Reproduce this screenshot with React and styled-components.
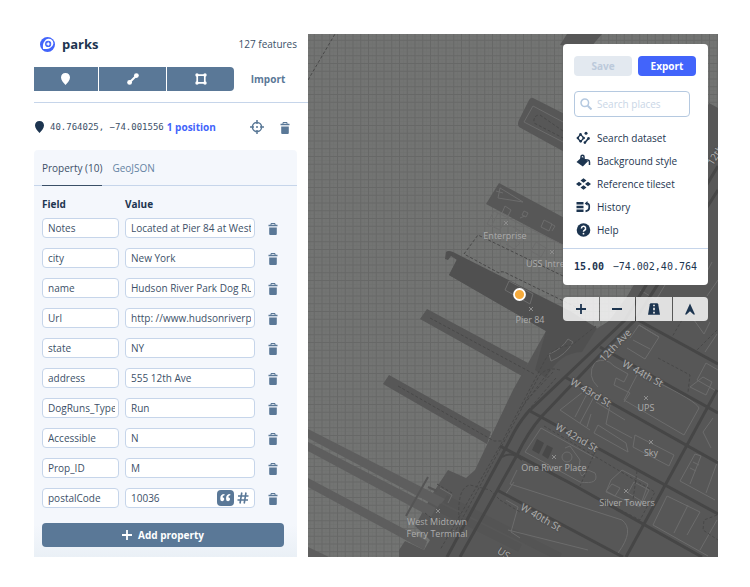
import React from "react";
import styled, { createGlobalStyle } from "styled-components";

const slate = "#5a7897";
const navy = "#1d3550";
const blue = "#4264fb";
const line = "#c6d5ea";
const ui = '"Open Sans", "Noto Sans", sans-serif';
const mono = '"DejaVu Sans Mono", "Liberation Mono", monospace';

const GlobalStyle = createGlobalStyle`
  *, *::before, *::after { box-sizing: border-box; }
  body { margin: 0; background: #fff; color: ${navy}; font: 10px/14px ${ui}; }
  button, input { font: inherit; color: inherit; }
  button { border: 0; padding: 0; background: none; cursor: pointer; }
  svg { display: block; }
`;

const Page = styled.main`
  display: flex;
  padding: 34px 32px 30px 34px;
`;

const Sidebar = styled.section`
  flex: 0 0 274px;
  display: flex;
  flex-direction: column;
`;

const Header = styled.header`
  display: flex;
  align-items: center;
  gap: 7px;
  height: 20px;
  padding: 0 11px 0 6px;
`;

const Title = styled.h1`
  flex: 1;
  margin: 0;
  font-size: 13px;
  line-height: 18px;
  font-weight: 700;
`;

const Count = styled.span`
  color: #3c5068;
`;

const DrawBar = styled.div`
  display: flex;
  align-items: center;
  margin: 13px 0 11px;
`;

const DrawGroup = styled.div`
  display: grid;
  grid-template-columns: 64px 67px 67px;
  gap: 1px;
  height: 24px;
  border-radius: 0 4px 4px 0;
  overflow: hidden;
`;

const DrawButton = styled.button`
  display: grid;
  place-items: center;
  background: ${slate};
  color: #fff;
`;

const ImportButton = styled.button`
  flex: 1;
  padding-right: 6px;
  color: ${slate};
  font-weight: 700;
`;

const Feature = styled.div`
  display: flex;
  align-items: center;
  height: 48px;
  padding-right: 9px;
  border-top: 1px solid ${line};
`;

const Coordinates = styled.span`
  margin: 0 3px 0 4px;
  color: #3c5068;
  font: 9px/14px ${mono};
`;

const Positions = styled.a`
  flex: 1;
  color: ${blue};
  font-weight: 700;
  text-decoration: none;
`;

const IconButton = styled.button`
  display: grid;
  place-items: center;
  width: 28px;
  height: 20px;
  color: ${slate};
`;

const Panel = styled.section`
  flex: 1;
  width: 263px;
  padding-bottom: 10px;
  border-radius: 4px 4px 0 0;
  background: linear-gradient(#f4f7fc 0 92%, #eaf0f6);
`;

const Tabs = styled.div`
  display: flex;
  gap: 10px;
  height: 36px;
  padding: 0 8px;
  border-bottom: 1px solid ${line};
`;

const Tab = styled.button`
  height: 36px;
  border-bottom: 1px solid ${(p) => (p.$active ? "#3a4f67" : "transparent")};
  color: ${(p) => (p.$active ? "#3c5068" : "#6483a3")};
`;

const Properties = styled.table`
  width: 247px;
  margin: 9px 8px 0;
  border-collapse: collapse;
  table-layout: fixed;
`;

const HeadCell = styled.th`
  width: ${(p) => p.$width};
  height: 18px;
  padding: 0;
  text-align: left;
  font-weight: 700;
`;

const Cell = styled.td`
  height: 30px;
  padding: 0 ${(p) => p.$right || "0"} 0 ${(p) => p.$left || "0"};
`;

const InputBox = styled.div`
  display: flex;
  align-items: center;
  height: 20px;
  padding-right: 3px;
  border: 1px solid ${line};
  border-radius: 4px;
  background: #fff;
`;

const TextInput = styled.input`
  flex: 1;
  min-width: 0;
  height: 18px;
  padding: 0;
  margin-left: 5px;
  border: 0;
  outline: 0;
  background: transparent;
  color: #3c5068;
`;

const TypeButton = styled.button`
  display: grid;
  place-items: center;
  width: 17px;
  height: 16px;
  border-radius: 4px;
  background: ${(p) => (p.$active ? slate : "transparent")};
  color: ${(p) => (p.$active ? "#fff" : slate)};
`;

const AddButton = styled.button`
  display: flex;
  align-items: center;
  justify-content: center;
  gap: 6px;
  width: 242px;
  height: 24px;
  margin: 10px 8px 0;
  border-radius: 4px;
  background: ${slate};
  color: #fff;
  font-weight: 700;
`;

const MapArea = styled.section`
  position: relative;
  flex: 1;
  min-width: 0;
  overflow: hidden;
  background: #717271;
`;

const MapCanvas = styled.svg`
  position: absolute;
  inset: 0;
  width: 100%;
  height: 100%;
  font: 9px ${ui};
`;

const Overlay = styled.div`
  position: absolute;
  top: 10px;
  right: 10px;
  width: 145px;
  display: flex;
  flex-direction: column;
  gap: 12px;
`;

const Card = styled.div`
  border-radius: 4px;
  background: #fff;
`;

const Actions = styled.div`
  display: grid;
  grid-template-columns: 1fr 1fr;
  gap: 6px;
  padding: 12px 12px 0 11px;
`;

const ActionButton = styled.button`
  height: 20px;
  border-radius: 4px;
  background: ${(p) => (p.$primary ? blue : "#e3e9f0")};
  color: ${(p) => (p.$primary ? "#fff" : "#bccadb")};
  font-weight: 700;
`;

const SearchBox = styled.label`
  display: flex;
  align-items: center;
  height: 26px;
  margin: 15px 18px 9px 11px;
  padding-left: 5px;
  border: 1px solid #b5c9e0;
  border-radius: 4px;
  color: #b5c9e0;
`;

const SearchInput = styled(TextInput)`
  &::placeholder { color: #c9d6e6; opacity: 1; }
`;

const Menu = styled.nav`
  display: flex;
  flex-direction: column;
  padding-bottom: 7px;
`;

const MenuItem = styled.button`
  display: flex;
  align-items: center;
  gap: 6px;
  height: 23px;
  padding-left: 13px;
  text-align: left;
`;

const Readout = styled.div`
  display: flex;
  justify-content: space-between;
  padding: 10px 11px 11px;
  border-top: 1px solid ${line};
  font: 10px/15px ${mono};
`;

const Zoom = styled.strong`
  font-weight: 700;
`;

const MapControls = styled.div`
  display: grid;
  grid-template-columns: repeat(4, 1fr);
  gap: 1px;
  height: 24px;
  border-radius: 4px;
  overflow: hidden;
`;

const ControlButton = styled.button`
  display: grid;
  place-items: center;
  background: rgba(255, 255, 255, 0.82);
`;

function Logo() {
  return (
    <svg width="15" height="15" viewBox="0 0 16 16" aria-hidden="true">
      <circle cx="8" cy="8" r="8" fill={blue} />
      <path d="M3.300 12.700C2.800 9.500 3.200 6.300 4.900 4.600A4.900 4.900 0 1 1 11.400 11.100c-1.700 1.700-4.900 2.100-8.100 1.600z" fill="#fff" />
      <circle cx="8.700" cy="7.400" r="3.300" fill={blue} />
      <path d="M8.700 4.900l.8 1.700 1.700.8-1.700.8-.8 1.700-.8-1.700-1.700-.8 1.700-.8z" fill="#fff" />
    </svg>
  );
}

function Pin() {
  return (
    <svg width="12" height="12" viewBox="0 0 12 12" aria-hidden="true">
      <path d="M5.500 0C2.700 0 1 2 1 4.500 1 7.500 3.500 9.500 5.500 12c2-2.500 4.500-4.500 4.500-7.500C10 2 8.300 0 5.500 0z" fill="currentColor" />
    </svg>
  );
}

function LineIcon() {
  return (
    <svg width="12" height="12" viewBox="0 0 12 12" fill="currentColor" aria-hidden="true">
      <path d="M3 9L9 3" stroke="currentColor" strokeWidth="2" />
      <circle cx="2.600" cy="9.400" r="2.400" />
      <circle cx="9.400" cy="2.600" r="2.400" />
    </svg>
  );
}

function PolygonIcon() {
  return (
    <svg width="12" height="12" viewBox="0 0 12 12" fill="currentColor" aria-hidden="true">
      <path d="M2.200 2.200h7.600v7.600H2.200z" fill="none" stroke="currentColor" strokeWidth="1.700" />
      <circle cx="2" cy="2" r="1.700" />
      <circle cx="10" cy="2" r="1.700" />
      <circle cx="2" cy="10" r="1.700" />
      <circle cx="10" cy="10" r="1.700" />
    </svg>
  );
}

function Target() {
  return (
    <svg width="14" height="14" viewBox="0 0 14 14" fill="none" stroke="currentColor" aria-hidden="true">
      <circle cx="7" cy="7" r="4.600" strokeWidth="1.500" />
      <path d="M7 0v4M7 10v4M0 7h4M10 7h4" strokeWidth="1.500" />
      <circle cx="7" cy="7" r="3" fill="#fff" stroke="none" />
      <circle cx="7" cy="7" r="1" fill="currentColor" stroke="none" />
    </svg>
  );
}

function Trash() {
  return (
    <svg width="10" height="14" viewBox="0 0 10 14" fill="currentColor" aria-hidden="true">
      <path d="M3 4V2.500h4V4" fill="none" stroke="currentColor" />
      <path d="M.5 3.700h9v1.600h-9zM1.200 6.400h7.600V13q0 1-1 1H2.200q-1 0-1-1z" />
    </svg>
  );
}

function Quote() {
  return (
    <svg width="11" height="10" viewBox="0 0 11 10" fill="currentColor" aria-hidden="true">
      <path d="M4.500 1C1.500 1 .3 2.800.3 5v1.200A2 2 0 1 0 2.600 4.200C2.600 3 3.300 2.400 4.500 2.200zM10.300 1C7.300 1 6.100 2.800 6.100 5v1.200A2 2 0 1 0 8.400 4.200c0-1.200.7-1.800 1.900-2z" />
    </svg>
  );
}

function Hash() {
  return (
    <svg width="12" height="12" viewBox="0 0 12 12" fill="none" stroke="currentColor" strokeWidth="1.600" aria-hidden="true">
      <path d="M4.800.5L3 11.500M9 .5L7.200 11.500M1 4h10.500M.5 8H11" />
    </svg>
  );
}

function Plus() {
  return (
    <svg width="10" height="10" viewBox="0 0 10 10" stroke="currentColor" strokeWidth="1.800" aria-hidden="true">
      <path d="M5 0v10M0 5h10" />
    </svg>
  );
}

function Minus() {
  return (
    <svg width="10" height="10" viewBox="0 0 10 10" stroke="currentColor" strokeWidth="1.800" aria-hidden="true">
      <path d="M0 5h10" />
    </svg>
  );
}

function Road() {
  return (
    <svg width="12" height="12" viewBox="0 0 12 12" aria-hidden="true">
      <path d="M3 .3h6q1 0 1.200 1L12 11.700H0L1.800 1.300Q2 .3 3 .3z" fill="currentColor" />
      <path d="M6 1.800v1.500M6 4.700v2.600M6 8.800v1.700" stroke="#e2e2e2" strokeWidth="1.800" />
    </svg>
  );
}

function Compass() {
  return (
    <svg width="12" height="12" viewBox="0 0 12 12" aria-hidden="true">
      <path d="M6 .5L11 11.500H9.500L6 8.300 2.500 11.500H1z" fill="currentColor" />
    </svg>
  );
}

function SearchIcon() {
  return (
    <svg width="12" height="12" viewBox="0 0 12 12" fill="none" stroke="currentColor" aria-hidden="true">
      <circle cx="4.800" cy="4.800" r="3.800" strokeWidth="1.500" />
      <path d="M7.700 7.700L11.500 11.500" strokeWidth="2" />
    </svg>
  );
}

function DatasetIcon() {
  return (
    <svg width="15" height="14" viewBox="0 0 15 14" fill="currentColor" aria-hidden="true">
      <path d="M4.500 3.500L8 7l-3.500 3.500L1.500 7z" fill="none" stroke="currentColor" strokeWidth="1.200" />
      <circle cx="4.500" cy="3.400" r="1.300" />
      <circle cx="1.900" cy="7" r="1.300" />
      <circle cx="7.600" cy="7" r="1.300" />
      <circle cx="4.700" cy="10.300" r="1.300" />
      <circle cx="10" cy="2.200" r="1.500" />
      <path d="M9 11.500l3.400-4" stroke="currentColor" strokeWidth="1.600" />
      <circle cx="8.900" cy="11.600" r="1.300" />
      <circle cx="12.500" cy="7.400" r="1.300" />
    </svg>
  );
}

function BucketIcon() {
  return (
    <svg width="15" height="14" viewBox="0 0 15 14" fill="currentColor" aria-hidden="true">
      <path d="M6 3L12 7.200 6.800 12.500.5 8z" />
      <path d="M5 6V2.800a1.500 1.500 0 0 1 3 0V5M9 5.800l2.800.2q1.700.2 1.700 2V11" fill="none" stroke="currentColor" strokeWidth="1.500" />
    </svg>
  );
}

function TilesetIcon() {
  return (
    <svg width="15" height="14" viewBox="0 0 15 14" fill="currentColor" aria-hidden="true">
      <path d="M7.500 1.200l3 2.300-3 2.300-3-2.300zM7.500 8.200l3 2.300-3 2.300-3-2.300zM3 4.700l3 2.300-3 2.300L0 7zM12 4.700L15 7l-3 2.300L9 7z" />
    </svg>
  );
}

function HistoryIcon() {
  return (
    <svg width="15" height="14" viewBox="0 0 15 14" fill="currentColor" aria-hidden="true">
      <path d="M.5 2h7v2.600h-7zM.5 5.700h7v2.600h-7zM.5 9.400h7V12h-7z" />
      <path d="M10.500 3.400h.5a2.200 2.200 0 0 1 2.200 2.200V8q0 2.500-3.700 3.400" fill="none" stroke="currentColor" strokeWidth="1.700" />
      <path d="M11.500 1v4.800L8.700 3.400z" />
    </svg>
  );
}

function HelpIcon() {
  return (
    <svg width="15" height="14" viewBox="0 0 15 14" aria-hidden="true">
      <circle cx="7.500" cy="7" r="6.800" fill="currentColor" />
      <path d="M5.400 5.400a2.100 2.100 0 1 1 3 1.900q-.9.500-.9 1.400" fill="none" stroke="#fff" strokeWidth="1.500" />
      <circle cx="7.500" cy="10.700" r=".9" fill="#fff" />
    </svg>
  );
}

const piers = [
  "M533 98L610 137 590 166 519 127Q517 124 519 120L529 100Q531 97 533 98Z",
  "M499 183L600 237 580 254 486 204Z",
  "M427 309L528 363 522 376 420 319Z",
  "M389 375L491 432 487 444 383 384Z",
  "M560 45L567 34H602L590 48Z",
];

const ferries = [
  "M308 429L445 499 438 507 308 438Z",
  "M308 442L436 508 431 517 308 451Z",
  "M308 478L427 541 424 550 308 487Z",
  "M308 547L329 557H308Z",
];

const streets = [
  "M626 557L717 390",
  "M638 320L718 364",
  "M600 347L718 413",
  "M565 377L718 463",
  "M530 411L718 514",
  "M500 446L570 483 702 557",
  "M497 490L623 557",
];

const avenues = [
  "M718 166L625 320 565 377 528 412Q517 425 510 440L447 557",
  "M718 190L635 320 598 357 542 416Q528 432 517 455L460 557",
];

const footpaths = [
  "M308 80L335 34",
  "M563 276L478 235 464 254 499 273Q502 270 508 274L580 309",
  "M563 131L540 115Q533 115 534 123L563 138",
  "M430 318L534 374",
  "M398 386L494 441 505 441",
  "M596 326L572 345Q552 347 545 360L500 446 440 550",
  "M560 370Q545 366 538 378L505 440 456 530",
  "M553 372L525 402M556 378L524 415M550 370L520 410",
  "M544 426L655 492 640 520 520 458M595 452L580 486M637 471L633 500",
  "M658 358L690 375 688 392M717 330L697 350M682 320L672 337",
  "M437 484L452 493M425 513L440 525M460 530Q455 488 470 485L490 490 500 500",
  "M717 515L704 520 703 530 718 540M500 500L520 512",
];

const outlines = [
  "M533 106L563 122M533 106L524 122 563 142",
  "M500 188L498 198 523 202 500 188M496 191L503 193",
  "M505 206L511 210 508 216 502 213ZM524 211L528 213 526 217 522 215ZM520 218L525 216M544 220L552 224 549 231 541 227ZM551 224L555 226 552 231",
  "M494 211L563 245M494 211L487 224 500 230 504 222 522 232M498 213L492 225M512 238L520 243 514 249 506 244M536 242L546 248 541 257 531 251Z",
  "M509 281L533 294 530 304M509 281L505 290 530 304",
  "M568 339L573 342Q566 355 551 361L549 354Q562 349 568 339Z",
  "M639 325L659 337 645 359 627 348M633 340L650 349M659 337L639 325 630 338",
  "M595 362Q606 357 614 366L628 374 624 382 616 378 614 385 630 393 624 402M595 362Q586 376 598 387",
  "M637 375L624 400 684 435 699 408Q696 401 655 381",
  "M588 388L560 410 590 430M590 388L575 417M595 395L580 423M591 414L587 427M598 425L626 443 628 452 594 433ZM596 402L625 420M610 405L606 424 632 438M635 435L674 455 669 466 633 447Z",
  "M541 428L595 458M541 428L525 452 580 482Q600 485 595 473L588 470 582 476Q578 472 580 460L570 446 565 448",
  "M562 457A5 5 0 1 0 572 457A5 5 0 1 0 562 457",
  "M611 480L622 470 648 484 640 507 606 492ZM634 482L649 490 643 502 628 493ZM612 484L620 488 615 496 606 491Z",
  "M517 470L510 484M510 484L622 520Q635 530 618 553M508 530L588 550",
  "M667 496L700 512 687 535M667 496L653 525 708 556M688 505L674 533M717 520L700 550",
  "M706 363L718 370M706 363L697 380 718 392M703 377L712 382 706 395 690 387ZM694 320L704 334 710 322M717 334L705 352",
  "M695 454L680 481 715 500M695 454L701 456 690 484M693 462L699 465M690 468L696 471M718 460L706 493M713 418L703 432 711 448",
  "M514 482L505 495M506 500L518 507 511 532 520 538M440 488L452 495 448 503",
  "M707 296L718 280M700 285L712 262M640 290L660 302M650 310L665 285",
];

const streetLabels = [
  ["12th Ave", 615, 345, -46],
  ["12th", 715, 155, -58],
  ["W 44th St", 643, 373, 29],
  ["W 43rd St", 591, 392, 31],
  ["W 42nd St", 577, 437, 30],
  ["W 40th St", 541, 517, 30],
  ["US", 504, 553, 33],
];

const places = [
  ["Enterprise", 505, 239, 506, 223],
  ["USS Intrepid", 552, 267, 552, 252],
  ["Pier 84", 530, 323, 531, 309],
  ["UPS", 646, 411, 646, 398],
  ["Sky", 651, 456, 651, 442],
  ["One River Place", 554, 471, 554, 457],
  ["Silver Towers", 627, 506, 626, 491],
  ["West Midtown", 437, 525, 438, 511],
  ["Ferry Terminal", 437, 537],
];

function ParkMap() {
  return (
    <MapCanvas viewBox="308 34 410 523" preserveAspectRatio="xMaxYMin slice" role="img" aria-label="Map">
      <defs>
        <pattern id="grid" x="306" y="32" width="7.750" height="7.750" patternUnits="userSpaceOnUse">
          <rect width="8" height="8" fill="#737473" />
          <path d="M4.500 0v8M0 4.500h8" stroke="#6e6f6e" strokeWidth=".7" />
          <path d="M.5 0v8M0 .5h8" stroke="#676867" />
        </pattern>
      </defs>
      <rect x="308" y="34" width="410" height="523" fill="url(#grid)" />
      <path
        d="M457 259L570 313 593 331 609 321 628 295 665 230 700 125 709 103 718 108V557H399V550L405 541 424 550 430 540 415 526 433 493 448 470 466 478 475 470 513 390 546 331 449 275Z"
        fill="#575757"
      />
      <path
        d="M445 259L446 252Q448 250 453 252L570 311 597 328 582 352Q560 352 546 378L535 370 546 331 449 275 457 260 451 256 448 260Z"
        fill="#505050"
      />
      {piers.map((d) => <path key={d} d={d} fill="#575757" />)}
      {ferries.map((d) => <path key={d} d={d} fill="#5e5e5e" />)}
      <path d="M428 477L406 516M428 487L437 491" stroke="#555" strokeWidth="2" />
      <path d="M438 507L520 548M445 499L560 557" stroke="#525252" strokeWidth="8" opacity=".5" />
      {outlines.map((d) => <path key={d} d={d} fill="none" stroke="#6c6c6c" />)}
      <path d="M537 439L544 443 539 454 532 450ZM547 445L553 448 548 459 542 455Z" fill="#484848" />
      {footpaths.map((d) => (
        <path key={d} d={d} fill="none" stroke="#484848" strokeDasharray="3 2" />
      ))}
      {streets.map((d) => <path key={d} d={d} fill="none" stroke="#464646" strokeWidth="3" />)}
      {avenues.map((d) => <path key={d} d={d} fill="none" stroke="#464646" strokeWidth="3" />)}
      <path d="M502 457Q512 451 522 460" fill="none" stroke="#464646" strokeWidth="2" />
      {streetLabels.map(([text, x, y, angle]) => (
        <text
          key={text + x}
          x={x}
          y={y}
          transform={`rotate(${angle} ${x} ${y})`}
          textAnchor="middle"
          dominantBaseline="central"
          fontSize="10"
          fill="#b0b0b0"
          stroke="#515151"
          strokeWidth="2"
          paintOrder="stroke"
        >
          {text}
        </text>
      ))}
      {places.map(([text, x, y, mx, my]) => (
        <g key={text}>
          {mx && <path d={`M${mx - 2} ${my - 2}l4 4m0-4l-4 4`} stroke="#8c8c8c" />}
          <text x={x} y={y} textAnchor="middle" fill="#acacac">{text}</text>
        </g>
      ))}
      <circle cx="519.500" cy="294.500" r="5.500" fill="#f6ab3c" stroke="#fff" strokeWidth="1.800" />
    </MapCanvas>
  );
}

const properties = [
  ["Notes", "Located at Pier 84 at West"],
  ["city", "New York"],
  ["name", "Hudson River Park Dog Run"],
  ["Url", "http: //www.hudsonriverpark.org"],
  ["state", "NY"],
  ["address", "555 12th Ave"],
  ["DogRuns_Type", "Run"],
  ["Accessible", "N"],
  ["Prop_ID", "M"],
  ["postalCode", "10036"],
];

const menu = [
  ["Search dataset", DatasetIcon],
  ["Background style", BucketIcon],
  ["Reference tileset", TilesetIcon],
  ["History", HistoryIcon],
  ["Help", HelpIcon],
];

export default function App() {
  return (
    <Page>
      <GlobalStyle />
      <Sidebar>
        <Header>
          <Logo />
          <Title>parks</Title>
          <Count>127 features</Count>
        </Header>
        <DrawBar>
          <DrawGroup>
            <DrawButton aria-label="Draw point"><Pin /></DrawButton>
            <DrawButton aria-label="Draw line"><LineIcon /></DrawButton>
            <DrawButton aria-label="Draw polygon"><PolygonIcon /></DrawButton>
          </DrawGroup>
          <ImportButton>Import</ImportButton>
        </DrawBar>
        <Feature>
          <Pin />
          <Coordinates>40.764025, −74.001556</Coordinates>
          <Positions href="#position">1 position</Positions>
          <IconButton aria-label="Zoom to feature"><Target /></IconButton>
          <IconButton aria-label="Delete feature"><Trash /></IconButton>
        </Feature>
        <Panel>
          <Tabs role="tablist">
            <Tab role="tab" aria-selected="true" $active>Property (10)</Tab>
            <Tab role="tab" aria-selected="false">GeoJSON</Tab>
          </Tabs>
          <Properties>
            <thead>
              <tr>
                <HeadCell $width="83px">Field</HeadCell>
                <HeadCell $width="130px">Value</HeadCell>
                <HeadCell $width="34px" />
              </tr>
            </thead>
            <tbody>
              {properties.map(([name, value]) => (
                <tr key={name}>
                  <Cell $right="6px">
                    <InputBox>
                      <TextInput aria-label={`Field ${name}`} defaultValue={name} />
                    </InputBox>
                  </Cell>
                  <Cell>
                    <InputBox>
                      <TextInput aria-label={`Value of ${name}`} defaultValue={value} />
                      {name === "postalCode" && (
                        <>
                          <TypeButton $active aria-label="Text value"><Quote /></TypeButton>
                          <TypeButton aria-label="Number value"><Hash /></TypeButton>
                        </>
                      )}
                    </InputBox>
                  </Cell>
                  <Cell $left="4px">
                    <IconButton aria-label={`Delete ${name}`}><Trash /></IconButton>
                  </Cell>
                </tr>
              ))}
            </tbody>
          </Properties>
          <AddButton><Plus />Add property</AddButton>
        </Panel>
      </Sidebar>
      <MapArea>
        <ParkMap />
        <Overlay>
          <Card>
            <Actions>
              <ActionButton disabled>Save</ActionButton>
              <ActionButton $primary>Export</ActionButton>
            </Actions>
            <SearchBox>
              <SearchIcon />
              <SearchInput type="search" placeholder="Search places" aria-label="Search places" />
            </SearchBox>
            <Menu>
              {menu.map(([label, Icon]) => (
                <MenuItem key={label}><Icon />{label}</MenuItem>
              ))}
            </Menu>
            <Readout>
              <Zoom>15.00</Zoom>
              <span>−74.002,40.764</span>
            </Readout>
          </Card>
          <MapControls>
            <ControlButton aria-label="Zoom in"><Plus /></ControlButton>
            <ControlButton aria-label="Zoom out"><Minus /></ControlButton>
            <ControlButton aria-label="Toggle roads"><Road /></ControlButton>
            <ControlButton aria-label="Reset north"><Compass /></ControlButton>
          </MapControls>
        </Overlay>
      </MapArea>
    </Page>
  );
}
